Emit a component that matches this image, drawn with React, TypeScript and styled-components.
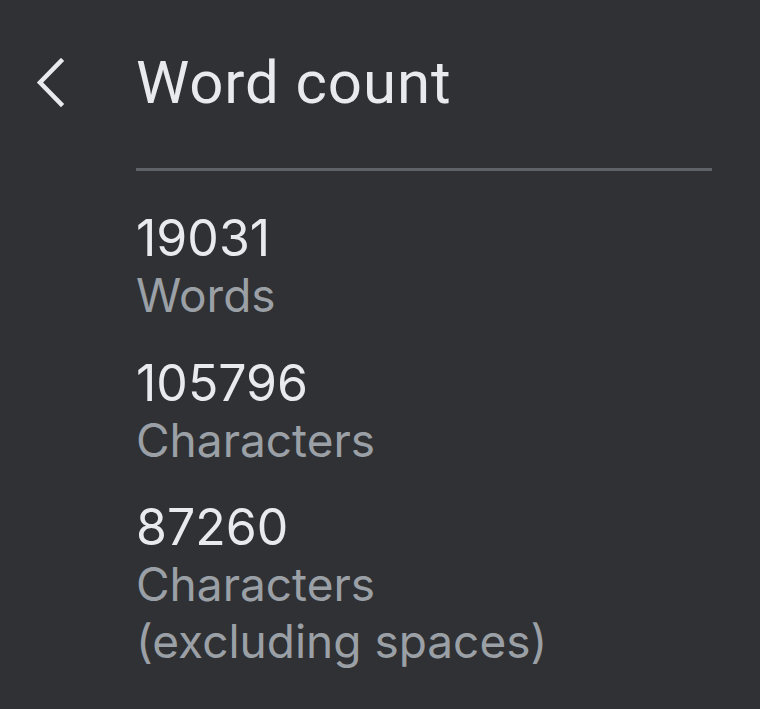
import React from "react";
import styled, { createGlobalStyle } from "styled-components";

const Global = createGlobalStyle`
  html, body { margin: 0; padding: 0; background: #303134; }
  body { font-family: Inter, "Noto Sans", sans-serif; }
`;

const Page = styled.div`
  width: 760px;
  height: 709px;
  background: #303134;
  box-sizing: border-box;
  padding: 52px 48px 0 36px;
`;

const Header = styled.header`
  display: flex;
  align-items: center;
  height: 62px;
`;

const BackButton = styled.button`
  width: 100px;
  height: 62px;
  padding: 0;
  border: 0;
  background: transparent;
  display: flex;
  align-items: center;
  justify-content: flex-start;
  cursor: pointer;
  color: #e8eaed;
`;

const Title = styled.h1`
  margin: 0;
  font-family: Roboto, "Liberation Sans", sans-serif;
  font-weight: 400;
  font-size: 60px;
  line-height: 62px;
  color: #e8eaed;
  letter-spacing: 0.9px;
`;

const Body = styled.div`
  margin-left: 100px;
  margin-top: 54px;
  border-top: 3px solid #5f6368;
  padding-top: 39px;
  display: flex;
  flex-direction: column;
  gap: 30.5px;
`;

const Stat = styled.div`
  display: flex;
  flex-direction: column;
`;

const Value = styled.div`
  font-size: 50px;
  line-height: 57px;
  color: #e8eaed;
`;

const Label = styled.div`
  font-size: 46px;
  line-height: 57px;
  color: #9aa0a6;
`;

const stats = [
  { value: "19031", label: ["Words"] },
  { value: "105796", label: ["Characters"] },
  { value: "87260", label: ["Characters", "(excluding spaces)"] },
];

export default function App() {
  return (
    <>
      <Global />
      <Page>
        <Header>
          <BackButton aria-label="Back">
            <svg width="30" height="50" viewBox="0 0 30 50" fill="none">
              <path d="M25 3 L4 24.5 L25 46" stroke="#e8eaed" strokeWidth="4.5" strokeLinecap="square" strokeLinejoin="miter" />
            </svg>
          </BackButton>
          <Title>Word count</Title>
        </Header>
        <Body>
          {stats.map((s) => (
            <Stat key={s.value}>
              <Value>{s.value}</Value>
              {s.label.map((l) => (
                <Label key={l}>{l}</Label>
              ))}
            </Stat>
          ))}
        </Body>
      </Page>
    </>
  );
}
